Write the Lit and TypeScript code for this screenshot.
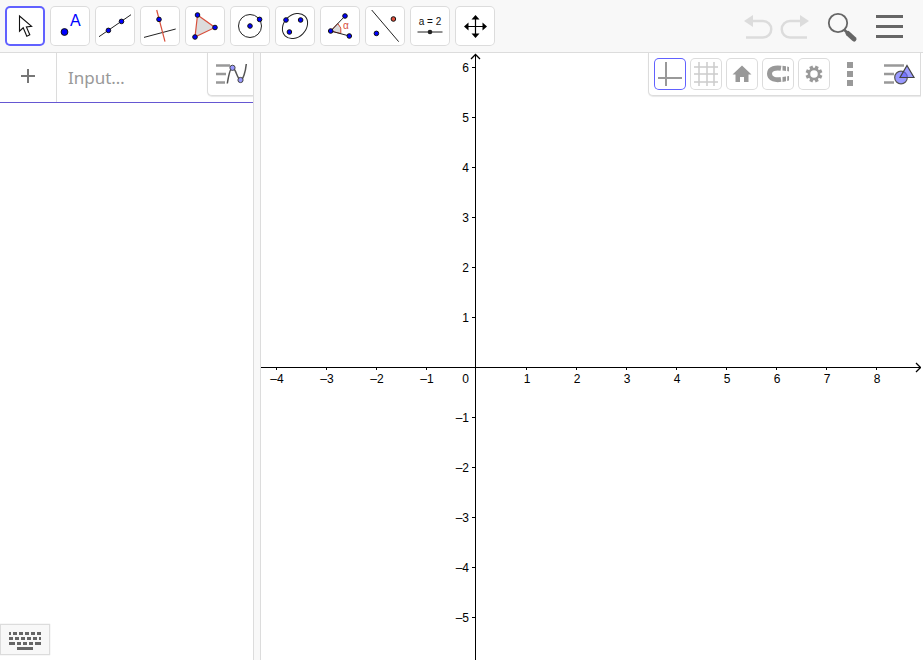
import { LitElement, html, svg, css } from "lit";
import { customElement, property, state } from "lit/decorators.js";
import { classMap } from "lit/directives/class-map.js";

const dot = (x: number, y: number, r = 2.3, fill = "#00f") =>
  svg`<circle cx=${x} cy=${y} r=${r} fill=${fill} stroke="#111" stroke-width="1" />`;

const BLACK = "#222";
const RED = "#d8503c";

const tools = [
  {
    label: "Move",
    art: svg`<path d="M14.5 10V25.2L18.2 21.8L21.8 30.2L24.8 28.8L21.4 21L26.6 20.4Z" fill="#fff" stroke="#111" stroke-width="1.1" />`,
  },
  {
    label: "Point",
    art: svg`${dot(14.5, 26, 3.4)}<text x="20" y="20" font-size="16" fill="#00f">A</text>`,
  },
  {
    label: "Line",
    art: svg`<path d="M4 30.7L36 8.7" stroke=${BLACK} />${dot(13.4, 24.4)}${dot(26.5, 15.4)}`,
  },
  {
    label: "Perpendicular line",
    art: svg`<path d="M4 31.4L35.7 23" stroke=${BLACK} /><path d="M16.7 4L25 35.7" stroke=${RED} stroke-width="1.2" />${dot(19, 13.4)}`,
  },
  {
    label: "Polygon",
    art: svg`<path d="M12.5 9L30 21.5L10 31Z" fill="#dcdcdc" stroke=${RED} stroke-width="1.2" />${dot(12.5, 9)}${dot(30, 21.5)}${dot(10, 31)}`,
  },
  {
    label: "Circle with center",
    art: svg`<circle cx="20" cy="20" r="11.5" fill="none" stroke=${BLACK} />${dot(20, 20)}${dot(29.6, 13.4)}`,
  },
  {
    label: "Ellipse",
    art: svg`<ellipse cx="20" cy="20" rx="14" ry="11" transform="rotate(-45 20 20)" fill="none" stroke=${BLACK} />${dot(11, 14)}${dot(25.6, 14)}${dot(14.4, 26)}`,
  },
  {
    label: "Angle",
    art: svg`<path d="M10.7 25L17.8 17.5A10.3 10.3 0 0 1 20.8 27.5Z" fill="#dcdcdc" stroke=${RED} /><path d="M25 10L10.7 25L29.3 30" fill="none" stroke=${BLACK} />${dot(25, 10)}${dot(10.7, 25)}${dot(29.3, 30)}<text x="23" y="23" font-size="10" fill=${RED}>α</text>`,
  },
  {
    label: "Reflect about line",
    art: svg`<path d="M6.7 4L33.7 35.7" stroke=${BLACK} />${dot(11.4, 27.4)}${dot(28.4, 13, 2.3, "#e0503c")}`,
  },
  {
    label: "Slider",
    art: svg`<text x="20" y="19" font-size="10" text-anchor="middle" fill="#111">a = 2</text><path d="M7.5 26H32.5" stroke=${BLACK} /><circle cx="20" cy="26" r="2.3" fill="#222" />`,
  },
  {
    label: "Move graphics view",
    art: svg`<path d="M20.5 12V29M12 20.5H29" stroke="#000" stroke-width="1.2" /><path d="M20.5 9L24.5 13.5H16.500ZM20.5 32L24.5 27.5H16.5ZM9 20.5L13.5 16.5V24.5ZM32 20.5L27.5 16.5V24.5Z" />`,
  },
];

const viewOptions = [
  { label: "Show axes", art: svg`<path d="M12 4V28M4 20H28" stroke="#999" stroke-width="2" />` },
  {
    label: "Show grid",
    art: svg`<path d="M9 4V28M17 4V28M24 4V28M4 9H28M4 16H28M4 24H28" stroke="#ccc" stroke-width="1.5" />`,
  },
  {
    label: "Standard view",
    art: svg`<path d="M16 7.5L25.5 16.5H22.5V24H18V19H14V24H9.5V16.5H6.5Z" fill="#999" />`,
  },
  {
    label: "Snap to points",
    art: svg`<path d="M19 10.2C14 9.400 7.5 10.200 7.5 15.8C7.500 21.400 14 22.200 19 21.400" fill="none" stroke="#999" stroke-width="5" /><path d="M20.500 7.800L24 8.3V13L20.500 12.600ZM25.2 8.5L27 9V13.4L25.2 13.1ZM20.500 19L24 18.5V23.2L20.500 23.9ZM25.2 18.3L27 18V22.5L25.2 23Z" fill="#999" />`,
  },
  {
    label: "Settings",
    art: svg`<circle cx="16" cy="16" r="5" fill="none" stroke="#999" stroke-width="2.5" />${[0, 45, 90, 135, 180, 225, 270, 315].map(
      (a) => svg`<path d="M14.3 10.5V7.6H17.7V10.5Z" fill="#999" transform="rotate(${a + 22.5} 16 16)" />`
    )}`,
  },
];

@customElement("icon-button")
class IconButton extends LitElement {
  @property() label = "";
  @property({ type: Number }) w = 40;
  @property({ type: Number }) h = 40;
  @property({ attribute: false }) art: unknown;
  @property({ type: Boolean }) framed = false;
  @property({ type: Boolean }) thick = false;
  @property({ type: Boolean }) active = false;
  @property({ type: Boolean }) off = false;

  static styles = css`
    :host { display: block; flex: none; }
    button {
      display: block;
      padding: 0;
      border: 0;
      background: none;
      border-radius: 5px;
      font: inherit;
      cursor: pointer;
    }
    svg { display: block; font-family: "Liberation Sans", Arial, sans-serif; }
    .framed { background: #fff; box-shadow: inset 0 0 0 1px #dcdcdc; }
    .framed.active { box-shadow: inset 0 0 0 1px #6161ff; }
    .framed.active.thick { box-shadow: inset 0 0 0 2px #6161ff; }
  `;

  render() {
    return html`<button
      type="button"
      aria-label=${this.label}
      ?disabled=${this.off}
      class=${classMap({ framed: this.framed, active: this.active, thick: this.thick })}
    >
      <svg width=${this.w} height=${this.h} viewBox="0 0 ${this.w} ${this.h}" aria-hidden="true">${this.art}</svg>
    </button>`;
  }
}

@customElement("graphics-view")
class GraphicsView extends LitElement {
  @state() viewWidth = 0;
  @state() viewHeight = 0;

  private observer = new ResizeObserver(() => this.measure());

  connectedCallback() {
    super.connectedCallback();
    this.observer.observe(this);
  }

  disconnectedCallback() {
    super.disconnectedCallback();
    this.observer.disconnect();
  }

  private measure() {
    this.viewWidth = this.clientWidth;
    this.viewHeight = this.clientHeight;
  }

  static styles = css`
    :host { display: block; position: relative; flex: 1; min-width: 0; overflow: hidden; background: #fff; }
    .plane { display: block; width: 100%; height: 100%; font: 12px "Liberation Sans", Arial, sans-serif; }
    .axis { stroke: #000; stroke-width: 1; shape-rendering: crispEdges; }
    .arrow { fill: none; stroke: #000; stroke-width: 1.3; }
    .stylebar {
      position: absolute;
      top: 0;
      right: 0;
      display: flex;
      align-items: center;
      gap: 4px;
      padding: 5px 2px 5px 5px;
      background: #fff;
      border: 1px solid #dcdcdc;
      border-top: 0;
      border-radius: 0 0 0 5px;
      box-shadow: 0 1px 1px #e8e8e8;
    }
    .last { margin-left: 12px; }
  `;

  render() {
    const ox = 214;
    const oy = 314;
    const unit = 50;
    const right = Math.max(0, Math.floor((this.viewWidth - ox - 12) / unit));
    const down = Math.max(0, Math.floor((this.viewHeight - oy - 8) / unit));
    const xs = Array.from({ length: right + 5 }, (_, i) => i - 4).filter((n) => n !== 0);
    const ys = Array.from({ length: down + 7 }, (_, i) => 6 - i).filter((n) => n !== 0);
    const name = (n: number) => (n < 0 ? `–${-n}` : `${n}`);
    const tickX = (n: number) => ox + n * unit + 1;
    return html`
      <svg class="plane" role="img" aria-label="Coordinate plane">
        <line class="axis" x1="0" x2="100%" y1=${oy + 0.5} y2=${oy + 0.5} />
        <line class="axis" x1=${ox + 0.5} x2=${ox + 0.5} y1="2" y2="100%" />
        ${xs.map(
          (n) => svg`<line class="axis" x1=${tickX(n) + 0.5} x2=${tickX(n) + 0.5} y1=${oy} y2=${oy + 3} />
            <text x=${tickX(n) + 1} y=${oy + 16} text-anchor="middle">${name(n)}</text>`
        )}
        ${ys.map(
          (n) => svg`<line class="axis" x1=${ox - 3} x2=${ox} y1=${oy + 0.5 - n * unit} y2=${oy + 0.5 - n * unit} />
            <text x=${ox - 6} y=${oy + 5 - n * unit} text-anchor="end">${name(n)}</text>`
        )}
        <text x=${ox - 6} y=${oy + 16} text-anchor="end">0</text>
        <path class="arrow" d="M${ox - 4} 6L${ox + 0.5} 1.5L${ox + 5} 6" />
        <svg x="100%" y=${oy} overflow="visible">
          <path class="arrow" d="M-5 -4L-0.5 0.5L-5 5" />
        </svg>
      </svg>
      <div class="stylebar" role="toolbar" aria-label="Graphics options">
        ${viewOptions.map(
          (o, i) => html`<icon-button framed .w=${32} .h=${32} .label=${o.label} .art=${o.art} ?active=${i === 0}></icon-button>`
        )}
        <icon-button
          .w=${32} .h=${32} label="More"
          .art=${svg`<path d="M13 4H19V10H13ZM13 13H19V19H13ZM13 22H19V28H13Z" fill="#999" />`}
        ></icon-button>
        <icon-button
          class="last" .w=${36} .h=${32} label="Toggle graphics style bar"
          .art=${svg`<path d="M2 7.5H22M2 16H12M2 24.5H12" stroke="#999" stroke-width="2.5" />
            <circle cx="19" cy="19.5" r="6.3" fill="#9999ff" stroke="#555" stroke-width="1.2" />
            <path d="M25 7.5L32 19.5H18Z" fill="#6666ff" fill-opacity=".65" stroke="#444" stroke-width="1.2" />`}
        ></icon-button>
      </div>
    `;
  }
}

@customElement("app-root")
class AppRoot extends LitElement {
  @state() tool = "Move";

  static styles = css`
    :host {
      display: flex;
      flex-direction: column;
      height: 100vh;
      box-sizing: border-box;
      padding: 0 2px 2px 0;
      background: #fff;
      overflow: hidden;
      font-family: "Noto Sans", sans-serif;
    }
    header {
      display: flex;
      align-items: center;
      justify-content: space-between;
      height: 52px;
      flex: none;
      margin-right: -2px;
      padding: 0 12px 0 5px;
      background: #f8f8f8;
      border-bottom: 1px solid #dcdcdc;
    }
    .tools { display: flex; gap: 5px; }
    .actions { display: flex; }
    .search { margin-left: 12px; }
    .menu { margin-left: 6px; }
    main { display: flex; flex: 1; min-height: 0; }
    .algebra { position: relative; display: flex; flex-direction: column; flex: none; width: 253px; }
    .row { display: flex; height: 49px; border-bottom: 1px solid #6557d2; }
    .add { width: 56px; display: flex; justify-content: center; border-right: 1px solid #dcdcdc; }
    .field {
      flex: 1;
      min-width: 0;
      padding: 0 0 0 11px;
      border: 0;
      outline: 0;
      background: none;
      font: 17px "Noto Sans", sans-serif;
      color: #333;
    }
    .field::placeholder { color: #999; opacity: 1; }
    .toggle {
      position: absolute;
      top: 0;
      right: 0;
      padding: 5px 0;
      background: #fff;
      border: 1px solid #dcdcdc;
      border-width: 0 0 1px 1px;
      border-radius: 0 0 0 5px;
      box-shadow: 0 1px 1px #e8e8e8;
    }
    .keyboard {
      margin-top: auto;
      margin-bottom: 5px;
      align-self: flex-start;
      background: #f8f8f8;
      border: 1px solid #dcdcdc;
      box-shadow: 0 0 1px #ccc;
    }
    .splitter { flex: none; width: 6px; background: #f8f8f8; border: 1px solid #dcdcdc; border-width: 0 1px; }
  `;

  render() {
    return html`
      <header>
        <div class="tools" role="toolbar" aria-label="Tools">
          ${tools.map(
            (t) => html`<icon-button
              framed thick .label=${t.label} .art=${t.art}
              ?active=${t.label === this.tool}
              @click=${() => (this.tool = t.label)}
            ></icon-button>`
          )}
        </div>
        <div class="actions">
          <icon-button
            off .w=${36} label="Undo"
            .art=${svg`<path d="M11 15H22A8 8 0 0 1 22 31.5H5" fill="none" stroke="#dcdcdc" stroke-width="2.5" /><path d="M3 15L12 9V21Z" fill="#dcdcdc" />`}
          ></icon-button>
          <icon-button
            off .w=${36} label="Redo"
            .art=${svg`<path d="M24 15H13A8 8 0 0 0 13 31.5H30" fill="none" stroke="#dcdcdc" stroke-width="2.5" /><path d="M32 15L23 9V21Z" fill="#dcdcdc" />`}
          ></icon-button>
          <icon-button
            class="search" .w=${40} label="Search"
            .art=${svg`<circle cx="13" cy="17" r="9.2" fill="none" stroke="#666" stroke-width="1.8" /><path d="M19.5 24L23 27.5" stroke="#666" stroke-width="2.5" /><path d="M23 27.5L29 33" stroke="#666" stroke-width="5" stroke-linecap="round" />`}
          ></icon-button>
          <icon-button
            class="menu" .w=${40} label="Menu"
            .art=${svg`<path d="M5 10.5H32M5 20.5H32M5 30.5H32" stroke="#666" stroke-width="3" />`}
          ></icon-button>
        </div>
      </header>
      <main>
        <section class="algebra" aria-label="Algebra">
          <div class="row">
            <div class="add">
              <icon-button
                .w=${40} .h=${46} label="Add item"
                .art=${svg`<path d="M20 16V30M13 23H27" stroke="#777" stroke-width="2" />`}
              ></icon-button>
            </div>
            <input class="field" type="text" aria-label="Input" placeholder="Input…" />
          </div>
          <div class="toggle">
            <icon-button
              .w=${45} .h=${32} label="Toggle algebra style bar"
              .art=${svg`<path d="M8 7.5H22M8 16H18M8 24.5H17" stroke="#999" stroke-width="2.5" />
                <path d="M19.300 25.5C21 15 22.500 9.5 24.5 9.5C27.500 9.5 29.500 22 32.5 22C35 22 37.500 14 38.300 6" fill="none" stroke="#555" stroke-width="1.5" />
                <circle cx="24.5" cy="9.8" r="2.6" fill="#9999ff" stroke="#444" /><circle cx="32.5" cy="22" r="2.6" fill="#9999ff" stroke="#444" />`}
            ></icon-button>
          </div>
          <icon-button
            class="keyboard" .w=${48} .h=${29} label="Open keyboard"
            .art=${svg`<path d="M8 7h2v3h-2zM12 7h4v3h-4zM18 7h4v3h-4zM24 7h4v3h-4zM30 7h4v3h-4zM36 7h4v3h-4zM8 12h4v3h-4zM14 12h4v3h-4zM20 12h4v3h-4zM26 12h4v3h-4zM32 12h4v3h-4zM38 12h2v3h-2zM8 17h6v3h-6zM16 17h4v3h-4zM22 17h4v3h-4zM28 17h4v3h-4zM34 17h6v3h-6zM16 22h16v3h-16z" fill="#666" />`}
          ></icon-button>
        </section>
        <div class="splitter"></div>
        <graphics-view></graphics-view>
      </main>
    `;
  }
}
